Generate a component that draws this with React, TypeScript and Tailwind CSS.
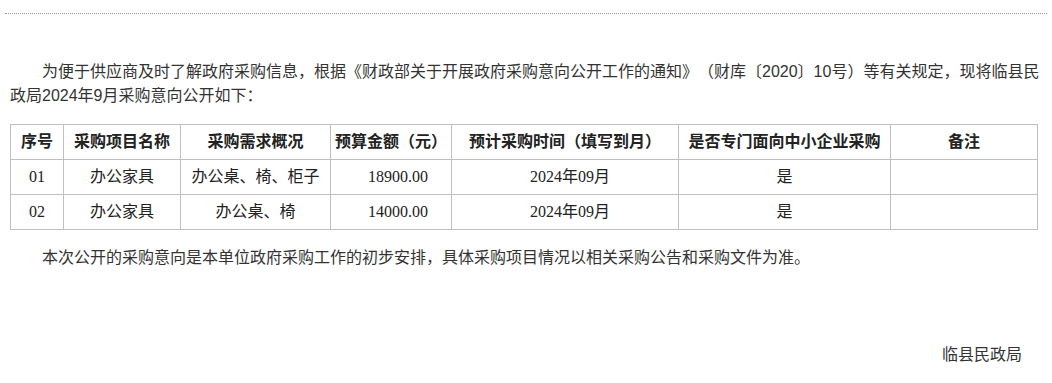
const rows = [
  { no: '01', name: '办公家具', need: '办公桌、椅、柜子', amount: '18900.00', time: '2024年09月', sme: '是', note: '' },
  { no: '02', name: '办公家具', need: '办公桌、椅', amount: '14000.00', time: '2024年09月', sme: '是', note: '' },
];

const heads = ['序号', '采购项目名称', '采购需求概况', '预算金额（元）', '预计采购时间（填写到月）', '是否专门面向中小企业采购', '备注'];
const widths = ['w-[53px]', 'w-[117px]', 'w-[150px]', 'w-[121px]', 'w-[227px]', 'w-[212px]', 'w-[147px]'];

export default function App() {
  return (
    <div className="w-[1052px] h-[383px] bg-white px-[5px] pt-[13px] text-[#333] font-['Liberation_Sans','Noto_Sans_CJK_SC',sans-serif] text-[16px] leading-[24px] [text-spacing-trim:space-all]">
      <div className="border-t border-dotted border-[#999]">
        <div className="px-[5px] pt-[46px]">
          {/* intro */}
          <p className="indent-[32px] w-[1032px]">
            为便于供应商及时了解政府采购信息，根据《财政部关于开展政府采购意向公开工作的通知》（财库〔2020〕10号）等有关规定，现将临县民政局2024年9月采购意向公开如下：
          </p>

          {/* table */}
          <table className="mt-[16px] w-[1027px] border-collapse table-fixed">
            <thead>
              <tr className="h-[35px]">
                {heads.map((h, i) => (
                  <th key={h} className={`${widths[i]} border border-[#bfbfbf] text-center font-bold text-[#222] p-0`}>
                    {h}
                  </th>
                ))}
              </tr>
            </thead>
            <tbody className="font-['Liberation_Serif','Noto_Sans_CJK_SC',serif] text-[#222]">
              {rows.map((r) => (
                <tr key={r.no} className="h-[35px]">
                  <td className="border border-[#bfbfbf] text-center p-0">{r.no}</td>
                  <td className="border border-[#bfbfbf] text-center p-0">{r.name}</td>
                  <td className="border border-[#bfbfbf] text-center p-0">{r.need}</td>
                  <td className="border border-[#bfbfbf] text-center p-0 pl-[14px]">{r.amount}</td>
                  <td className="border border-[#bfbfbf] text-center p-0 pl-[10px]">{r.time}</td>
                  <td className="border border-[#bfbfbf] text-center p-0">{r.sme}</td>
                  <td className="border border-[#bfbfbf] text-center p-0">{r.note}</td>
                </tr>
              ))}
            </tbody>
          </table>

          <p className="mt-[16px] indent-[32px]">
            本次公开的采购意向是本单位政府采购工作的初步安排，具体采购项目情况以相关采购公告和采购文件为准。
          </p>

          <p className="mt-[73px] text-right pr-[20px]">临县民政局</p>
        </div>
      </div>
    </div>
  );
}
